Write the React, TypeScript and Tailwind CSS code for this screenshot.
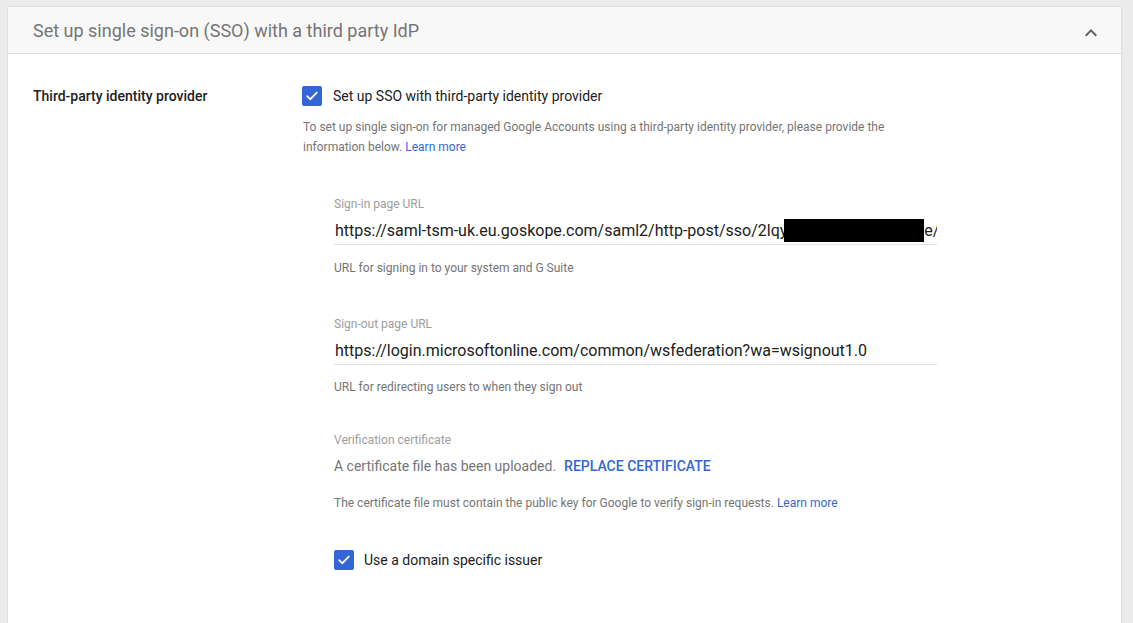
import React from "react";

function Check() {
  return (
    <span className="flex h-[20px] w-[20px] shrink-0 items-center justify-center rounded-[2px] bg-[#3367d6]">
      <svg width="14" height="14" viewBox="0 0 24 24" fill="none">
        <path d="M4 12.5l5 5L20 6.5" stroke="#fff" strokeWidth="3" strokeLinecap="square" />
      </svg>
    </span>
  );
}

export default function App() {
  return (
    <div className="min-h-screen overflow-hidden bg-[#ebebeb] pl-[8px] pt-[7px]" style={{ fontFamily: "Roboto, 'Liberation Sans', sans-serif" }}>
      <div className="w-[1113px] bg-white shadow-[0_0_2px_rgba(0,0,0,0.18)]">
        <div className="flex h-[47px] items-center justify-between border-b border-[#dcdcdc] bg-[#f8f8f8] pl-[25px] pr-[18px]">
          <div className="pt-[2px] text-[18px] leading-[24px] text-[#757575]">Set up single sign-on (SSO) with a third party IdP</div>
          <svg className="mt-[5px]" width="24" height="24" viewBox="0 0 24 24" fill="#616161">
            <path d="M12 8l-6 6 1.41 1.41L12 10.83l4.59 4.58L18 14z" />
          </svg>
        </div>
        <div className="flex pb-[60px] pl-[25px] pt-[32px]">
          <div className="w-[269px] text-[14px] font-medium leading-[20px] text-[#212121]">Third-party identity provider</div>
          <div className="flex flex-col">
            <div className="flex items-center gap-[11px]">
              <Check />
              <span className="text-[14px] leading-[20px] text-[#212121]">Set up SSO with third-party identity provider</span>
            </div>
            <div className="mt-[11px] pl-[1px] text-[12px] leading-[20px] text-[#757575]">
              To set up single sign-on for managed Google Accounts using a third-party identity provider, please provide the
              <br />
              information below. <span className="text-[#3367d6]">Learn more</span>
            </div>
            <div className="ml-[32px] mt-[39px] flex w-[603px] flex-col">
              <div className="text-[12px] leading-[16px] text-[#9e9e9e]">Sign-in page URL</div>
              <div className="mt-[7px] flex h-[26px] items-start overflow-hidden whitespace-nowrap border-b border-[#e0e0e0] pl-[1px] text-[16px] leading-[24px] text-[#212121]">
                <span>https://saml-tsm-uk.eu.goskope.com/saml2/http-post/sso/2lqy</span>
                <span className="ml-[-3px] h-[23px] w-[140px] shrink-0 bg-black" />
                <span>e/</span>
              </div>
              <div className="mt-[15px] text-[12px] leading-[16px] text-[#757575]">URL for signing in to your system and G Suite</div>

              <div className="mt-[40px] text-[12px] leading-[16px] text-[#9e9e9e]">Sign-out page URL</div>
              <div className="mt-[7px] h-[26px] overflow-hidden whitespace-nowrap border-b border-[#e0e0e0] pl-[1px] text-[16px] leading-[24px] text-[#212121]">
                https://login.microsoftonline.com/common/wsfederation?wa=wsignout1.0
              </div>
              <div className="mt-[14px] text-[12px] leading-[16px] text-[#757575]">URL for redirecting users to when they sign out</div>

              <div className="mt-[37px] text-[12px] leading-[16px] text-[#9e9e9e]">Verification certificate</div>
              <div className="mt-[8px] flex items-center gap-[8px] text-[14px] leading-[20px]">
                <span className="text-[#757575]">A certificate file has been uploaded.</span>
                <span className="font-medium text-[#3367d6]">REPLACE CERTIFICATE</span>
              </div>
              <div className="mt-[19px] text-[12px] leading-[16px] text-[#757575]">
                The certificate file must contain the public key for Google to verify sign-in requests.{" "}
                <span className="text-[#3367d6]">Learn more</span>
              </div>

              <div className="mt-[39px] flex items-center gap-[10px]">
                <Check />
                <span className="text-[14px] leading-[20px] text-[#212121]">Use a domain specific issuer</span>
              </div>
            </div>
          </div>
        </div>
      </div>
    </div>
  );
}
